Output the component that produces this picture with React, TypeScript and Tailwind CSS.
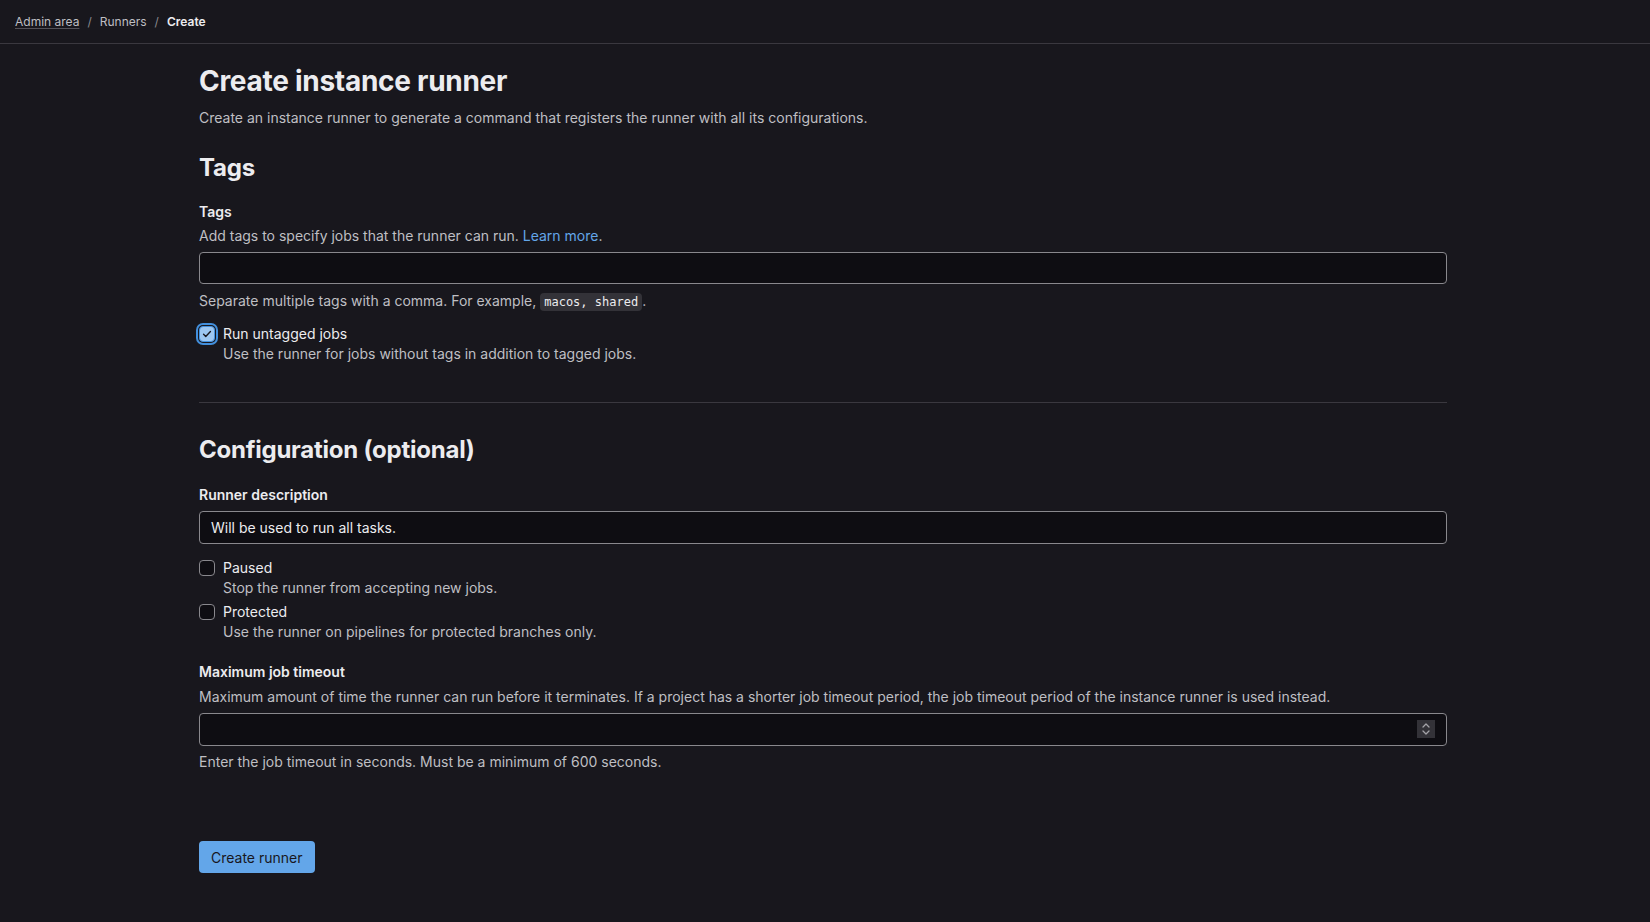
import React from "react";

function Checkbox({ checked }: { checked?: boolean }) {
  if (checked) {
    return (
      <span className="mt-[2px] flex h-4 w-4 shrink-0 items-center justify-center rounded-[4px] border border-[#428fdc] bg-[#9dc7f1] shadow-[0_0_0_1px_#18171d,0_0_0_3px_#428fdc]">
        <svg width="10" height="10" viewBox="0 0 16 16" fill="none">
          <path d="M2.5 8.5l3.5 3.5 7.5-8" stroke="#18171d" strokeWidth="2.2" strokeLinecap="round" strokeLinejoin="round" />
        </svg>
      </span>
    );
  }
  return <span className="mt-[2px] h-4 w-4 shrink-0 rounded-[4px] border border-[#89888d] bg-[#0e0d12]" />;
}

function CheckRow({ checked, label, help }: { checked?: boolean; label: string; help: string }) {
  return (
    <div className="flex gap-2">
      <Checkbox checked={checked} />
      <div>
        <div className="text-[14px] leading-5 text-[#ececef]">{label}</div>
        <div className="text-[14px] leading-5 text-[#bfbfc3]">{help}</div>
      </div>
    </div>
  );
}

export default function App() {
  return (
    <div className="min-h-[922px] bg-[#18171d] text-[#ececef]" style={{ fontFamily: "Inter, 'Noto Sans', sans-serif" }}>
      <div className="flex h-[44px] items-center border-b border-[#3a383f] px-[15px] text-[12px]">
        <span className="text-[#bfbfc3] underline decoration-[#535158] underline-offset-2">Admin area</span>
        <span className="mx-[8px] text-[#89888d]">/</span>
        <span className="text-[#bfbfc3]">Runners</span>
        <span className="mx-[8px] text-[#89888d]">/</span>
        <span className="font-semibold text-[#ececef]">Create</span>
      </div>
      <div className="ml-[199px] w-[1248px] pt-[20px]">
        <h1 className="text-[28px] font-bold leading-[35px] tracking-[-0.01em]">Create instance runner</h1>
        <p className="mt-[9px] text-[14px] leading-5 text-[#bfbfc3]">
          Create an instance runner to generate a command that registers the runner with all its configurations.
        </p>
        <h2 className="mt-[25px] text-[24px] font-bold leading-[30px] tracking-[-0.01em]">Tags</h2>
        <div className="mt-[19px] text-[14px] font-semibold leading-5">Tags</div>
        <div className="mt-[4px] text-[14px] leading-5 text-[#bfbfc3]">
          Add tags to specify jobs that the runner can run. <span className="text-[#63a6e9]">Learn more</span>.
        </div>
        <div className="mt-[6px] h-[32px] rounded-[4px] border border-[#89888d] bg-[#0e0d12]" />
        <div className="mt-[7px] text-[14px] leading-5 text-[#bfbfc3]">
          Separate multiple tags with a comma. For example,{" "}
          <code className="rounded-[4px] bg-[#333238] px-[4px] py-[2px] text-[12px] text-[#ececef]" style={{ fontFamily: "'DejaVu Sans Mono', 'Liberation Mono', monospace" }}>
            macos, shared
          </code>
          .
        </div>
        <div className="mt-[12px]">
          <CheckRow checked label="Run untagged jobs" help="Use the runner for jobs without tags in addition to tagged jobs." />
        </div>
        <hr className="mt-[38px] border-t border-[#3a383f]" />
        <h2 className="mt-[32px] text-[24px] font-bold leading-[30px] tracking-[-0.01em]">Configuration (optional)</h2>
        <div className="mt-[20px] text-[14px] font-semibold leading-5">Runner description</div>
        <div className="mt-[6px] flex h-[33px] items-center rounded-[4px] border border-[#89888d] bg-[#0e0d12] px-[11px] text-[14px] text-[#ececef]">
          Will be used to run all tasks.
        </div>
        <div className="mt-[14px] flex flex-col gap-[4px]">
          <CheckRow label="Paused" help="Stop the runner from accepting new jobs." />
          <CheckRow label="Protected" help="Use the runner on pipelines for protected branches only." />
        </div>
        <div className="mt-[20px] text-[14px] font-semibold leading-5">Maximum job timeout</div>
        <div className="mt-[5px] text-[14px] leading-5 text-[#bfbfc3]">
          Maximum amount of time the runner can run before it terminates. If a project has a shorter job timeout period, the job timeout period of the instance runner is used instead.
        </div>
        <div className="relative mt-[6px] h-[33px] rounded-[4px] border border-[#89888d] bg-[#0e0d12]">
          <div className="absolute right-[11px] top-[6px] flex h-[18px] w-[18px] flex-col items-center justify-center bg-[#333238]">
            <svg width="10" height="14" viewBox="0 0 10 14" fill="none">
              <path d="M2 5l3-3 3 3" stroke="#a4a3a8" strokeWidth="1.3" strokeLinecap="round" strokeLinejoin="round" />
              <path d="M2 9l3 3 3-3" stroke="#a4a3a8" strokeWidth="1.3" strokeLinecap="round" strokeLinejoin="round" />
            </svg>
          </div>
        </div>
        <div className="mt-[6px] text-[14px] leading-5 text-[#bfbfc3]">
          Enter the job timeout in seconds. Must be a minimum of 600 seconds.
        </div>
        <button className="mt-[69px] flex h-[32px] items-center rounded-[4px] bg-[#63a6e9] px-[12px] text-[14px] text-[#18171d]">
          Create runner
        </button>
      </div>
    </div>
  );
}
